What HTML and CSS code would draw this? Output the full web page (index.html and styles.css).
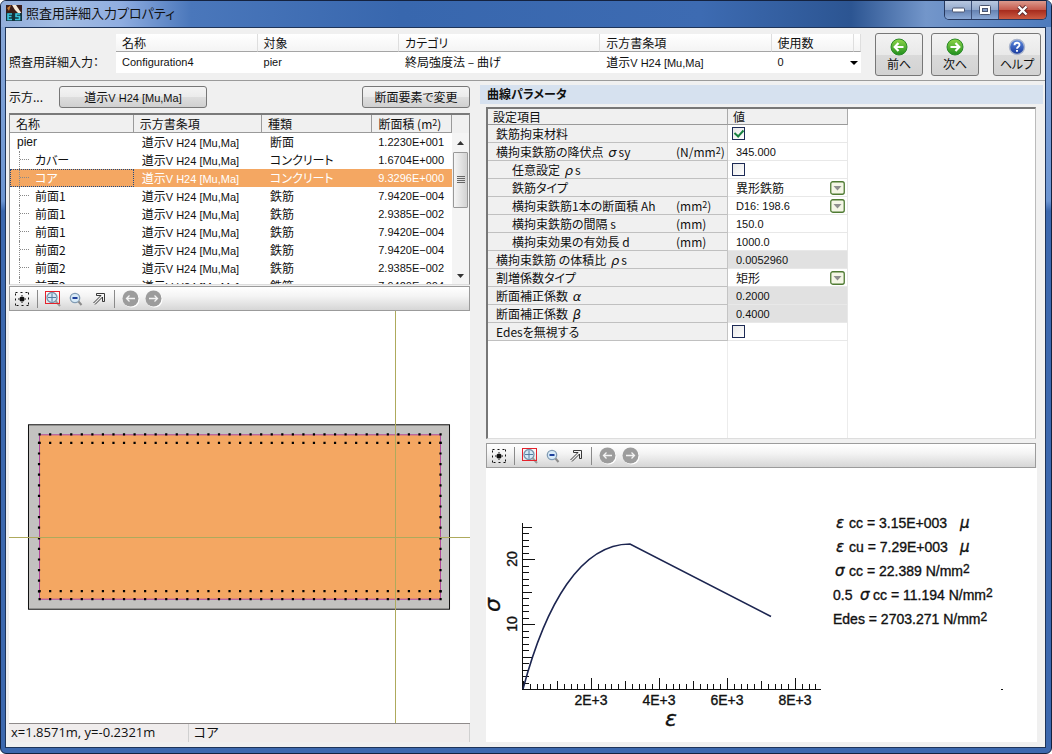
FILE: index.html
```html
<!DOCTYPE html>
<html lang="ja">
<head>
<meta charset="utf-8">
<title>照査用詳細入力プロパティ</title>
<link rel="stylesheet" href="styles.css">
</head>
<body>
<svg class="defs" width="0" height="0" aria-hidden="true">
  <defs>
    <linearGradient id="green" x1="0" y1="0" x2="0" y2="1"><stop offset="0" stop-color="#8fd64a"/><stop offset="1" stop-color="#1f8f1c"/></linearGradient>
    <linearGradient id="blue" x1="0" y1="0" x2="0" y2="1"><stop offset="0" stop-color="#5d8be0"/><stop offset="1" stop-color="#17389c"/></linearGradient>
    <symbol id="i-fit" viewBox="0 0 14 14"><path d="M.5 3.500V.5H3.500M5.500 .5H8.500M10.500 .5H13.500V3.500M13.500 5.500V8.500M13.500 10.500V13.500H10.500M8.500 13.500H5.500M3.500 13.500H.5V10.500M.5 8.500V5.500" fill="none" stroke="#111" stroke-dasharray="2 1"/><circle cx="7" cy="7" r="2.600" fill="#111"/><path d="M3 7H4M10 7H11M7 3V4M7 10V11" stroke="#111"/></symbol>
    <symbol id="i-zoomin" viewBox="0 0 16 16"><circle cx="7" cy="6.500" r="5" fill="#d5e9f6" stroke="#7894ac" stroke-width="1.300"/><path d="M7 2.500V10.500M3 6.500H11" stroke="#557da0"/><path d="M10.500 10L15 15" stroke="#999" stroke-width="2"/><rect x=".5" y=".5" width="14" height="12" fill="none" stroke="#e5222c"/></symbol>
    <symbol id="i-zoomout" viewBox="0 0 14 14"><circle cx="6" cy="6" r="4.700" fill="#d8ebf8" stroke="#829cb4" stroke-width="1.300"/><path d="M3.500 6H8.500" stroke="#1d3f9b" stroke-width="2"/><path d="M9.500 9.500L12.500 13" stroke="#8b8b8b" stroke-width="2"/></symbol>
    <symbol id="i-arrow" viewBox="0 0 14 14"><path d="M1.500 11L9 3.500H4.500V1.500H12.500V9.500H10.500V5L3 12.500" fill="none" stroke="#222" stroke-width=".9"/></symbol>
    <symbol id="i-back" viewBox="0 0 18 18"><circle cx="9.500" cy="9.500" r="8" fill="#fff"/><circle cx="8.500" cy="8.500" r="8" fill="#9c9c9c"/><path d="M13 8.500H4.500M7.500 5.500L4.500 8.500L7.500 11.500" fill="none" stroke="#f4f4f4" stroke-width="1.300"/></symbol>
    <symbol id="i-next" viewBox="0 0 18 18"><circle cx="9.500" cy="9.500" r="8" fill="#fff"/><circle cx="8.500" cy="8.500" r="8" fill="#9c9c9c"/><path d="M4 8.500H12.500M9.500 5.500L12.500 8.500L9.500 11.500" fill="none" stroke="#f4f4f4" stroke-width="1.300"/></symbol>
    <symbol id="i-drop" viewBox="0 0 15 14"><rect x=".75" y=".75" width="13.500" height="12.500" rx="2" fill="#f4f6e6" stroke="#4f7b33" stroke-width="1.300"/><path d="M3.500 5H11.500L7.500 9.500Z" fill="#8f8f8f"/></symbol>
  </defs>
</svg>

<div class="window">
  <header class="titlebar">
    <svg class="app-icon" viewBox="0 0 16 16" aria-hidden="true"><rect width="16" height="16" fill="#3a1c17"/><path d="M6 0H10L16 9V12L9 5Z" fill="#f6e9d8"/><path d="M1 3L5 0L3 6Z" fill="#c67a34"/><path d="M0 8H16V16H0Z" fill="#13323c"/><path d="M6 9H2V14.500H6M2 11.500H5.500M14 9H10V11.500H13.500V14.500H9" fill="none" stroke="#3cc4dc" stroke-width="1.600"/></svg>
    <h1 class="title">照査用詳細入力プロパティ</h1>
    <div class="caption-buttons">
      <button class="cap" aria-label="最小化"><svg width="13" height="6" viewBox="0 0 13 6"><rect x=".5" y="1" width="12" height="4" rx="1" fill="#fff" stroke="#4b5570"/></svg></button>
      <button class="cap" aria-label="最大化"><svg width="12" height="10" viewBox="0 0 12 10"><rect x=".5" y=".5" width="11" height="9" rx="1" fill="#fff" stroke="#4b5570"/><rect x="3.500" y="3.500" width="5" height="3" fill="#7e9ac9" stroke="#4b5570"/></svg></button>
      <button class="cap cap-close" aria-label="閉じる"><svg width="13" height="11" viewBox="0 0 13 11"><path d="M2.500 1.500L10.500 9.500M10.500 1.500L2.500 9.500" stroke="#57262a" stroke-width="4"/><path d="M2.500 1.500L10.500 9.500M10.500 1.500L2.500 9.500" stroke="#fff" stroke-width="2.400"/></svg></button>
    </div>
  </header>

  <div class="client">
    <section class="topbar">
      <span class="topbar-label">照査用詳細入力：</span>
      <table class="config">
        <colgroup><col class="c-name"><col class="c-name"><col class="c-cat"><col class="c-code"><col class="c-use"><col class="c-end"></colgroup>
        <thead><tr><th>名称</th><th>対象</th><th>カテゴリ</th><th>示方書条項</th><th>使用数</th><th></th></tr></thead>
        <tbody><tr><td>Configuration4</td><td>pier</td><td><span class="jp">終局強度法 – 曲げ</span></td><td><span class="jp">道示</span>V H24 [Mu,Ma]</td><td colspan="2"><div class="use">0<button class="open" aria-label="一覧を開く"><svg width="8" height="4" viewBox="0 0 8 4"><path d="M0 0H8L4 4Z"/></svg></button></div></td></tr></tbody>
      </table>
      <div class="nav">
        <button class="big"><svg width="18" height="18" viewBox="0 0 18 18"><circle cx="9" cy="9" r="8" fill="url(#green)" stroke="#2c8a2a"/><path d="M13.500 9H5M8.500 5L4.700 9L8.500 13" fill="none" stroke="#fff" stroke-width="2.200"/></svg>前へ</button>
        <button class="big"><svg width="18" height="18" viewBox="0 0 18 18"><circle cx="9" cy="9" r="8" fill="url(#green)" stroke="#2c8a2a"/><path d="M4.500 9H13M9.500 5L13.300 9L9.500 13" fill="none" stroke="#fff" stroke-width="2.200"/></svg>次へ</button>
        <button class="big big-help"><svg width="18" height="18" viewBox="0 0 18 18"><circle cx="9" cy="9" r="7.500" fill="url(#blue)" stroke="#a9b4cc" stroke-width="1.400"/><path d="M6.500 7.200C6.500 3.800 11.600 4 11.500 7C11.400 8.800 9 8.700 9 10.800M9 12V13.800" fill="none" stroke="#fff" stroke-width="1.900"/></svg>ヘルプ</button>
      </div>
    </section>

    <main class="panes">
      <section class="left">
        <div class="actions">
          <span class="actions-label">示方...</span>
          <button class="btn btn-code"><span class="jp">道示</span>V H24 [Mu,Ma]</button>
          <button class="btn btn-change"><span class="jp">断面要素で変更</span></button>
        </div>
        <div class="list">
          <div class="list-clip">
            <table class="elements">
              <colgroup><col class="e-name"><col class="e-code"><col class="e-kind"><col class="e-area"></colgroup>
              <thead><tr><th>名称</th><th>示方書条項</th><th>種類</th><th>断面積 (m<sup>2</sup>)</th></tr></thead>
              <tbody>
                <tr><td class="root">pier</td><td><span class="jp">道示</span>V H24 [Mu,Ma]</td><td class="jp">断面</td><td class="num">1.2230E+001</td></tr>
                <tr><td><div class="node"><i class="stem"></i><span class="jp">カバー</span></div></td><td><span class="jp">道示</span>V H24 [Mu,Ma]</td><td class="jp">コンクリート</td><td class="num">1.6704E+000</td></tr>
                <tr class="selected"><td><div class="node"><i class="stem"></i><span class="jp">コア</span></div></td><td><span class="jp">道示</span>V H24 [Mu,Ma]</td><td class="jp">コンクリート</td><td class="num">9.3296E+000</td></tr>
                <tr><td><div class="node"><i class="stem"></i><span class="jp">前面1</span></div></td><td><span class="jp">道示</span>V H24 [Mu,Ma]</td><td class="jp">鉄筋</td><td class="num">7.9420E−004</td></tr>
                <tr><td><div class="node"><i class="stem"></i><span class="jp">前面1</span></div></td><td><span class="jp">道示</span>V H24 [Mu,Ma]</td><td class="jp">鉄筋</td><td class="num">2.9385E−002</td></tr>
                <tr><td><div class="node"><i class="stem"></i><span class="jp">前面1</span></div></td><td><span class="jp">道示</span>V H24 [Mu,Ma]</td><td class="jp">鉄筋</td><td class="num">7.9420E−004</td></tr>
                <tr><td><div class="node"><i class="stem"></i><span class="jp">前面2</span></div></td><td><span class="jp">道示</span>V H24 [Mu,Ma]</td><td class="jp">鉄筋</td><td class="num">7.9420E−004</td></tr>
                <tr><td><div class="node"><i class="stem"></i><span class="jp">前面2</span></div></td><td><span class="jp">道示</span>V H24 [Mu,Ma]</td><td class="jp">鉄筋</td><td class="num">2.9385E−002</td></tr>
                <tr><td><div class="node"><i class="stem"></i><span class="jp">前面2</span></div></td><td><span class="jp">道示</span>V H24 [Mu,Ma]</td><td class="jp">鉄筋</td><td class="num">7.9420E−004</td></tr>
              </tbody>
            </table>
          </div>
          <div class="scroll" aria-hidden="true">
            <svg width="7" height="4" viewBox="0 0 7 4"><path d="M0 4L3.500 0L7 4Z" fill="#333"/></svg>
            <div class="thumb"><svg width="8" height="8" viewBox="0 0 8 8"><path d="M0 .5H8M0 2.500H8M0 4.500H8M0 6.500H8" stroke="#666"/></svg></div>
            <svg class="down" width="7" height="4" viewBox="0 0 7 4"><path d="M0 0L3.500 4L7 0Z" fill="#333"/></svg>
          </div>
        </div>
        <div class="tools">
          <button class="tool" aria-label="全体表示"><svg width="14" height="14"><use href="#i-fit"/></svg></button>
          <i class="sep"></i>
          <button class="tool" aria-label="拡大"><svg width="16" height="16"><use href="#i-zoomin"/></svg></button>
          <button class="tool" aria-label="縮小"><svg width="14" height="14"><use href="#i-zoomout"/></svg></button>
          <button class="tool" aria-label="移動"><svg width="14" height="14"><use href="#i-arrow"/></svg></button>
          <i class="sep"></i>
          <button class="tool" aria-label="戻る"><svg width="18" height="18"><use href="#i-back"/></svg></button>
          <button class="tool" aria-label="進む"><svg width="18" height="18"><use href="#i-next"/></svg></button>
        </div>
        <div class="canvas">
          <svg viewBox="0 0 462 411" preserveAspectRatio="xMidYMid slice" role="img" aria-label="断面図">
            <rect x="20.500" y="113.500" width="420" height="184" fill="#c3c2c0" stroke="#111"/>
            <rect x="31.500" y="123.500" width="400" height="164" fill="#f4a762" stroke="#b0489c"/>
            <path d="M30.500 123H433M30.500 287.500H433M30.500 131.500H433M30.500 279.500H433" stroke="#000" stroke-width="2.200" stroke-dasharray="2.200 8.326"/>
            <path d="M31 130.500V282M431.500 130.500V282" stroke="#000" stroke-width="2.200" stroke-dasharray="2.200 8.371"/>
            <path d="M0 225.500H462M386.500 0V411" stroke="#aeaa5c" shape-rendering="crispEdges"/>
          </svg>
        </div>
        <footer class="status"><span class="pos">x=1.8571m, y=-0.2321m</span><span class="sel">コア</span></footer>
      </section>

      <section class="right">
        <h2 class="band">曲線パラメータ</h2>
        <div class="params-box">
          <table class="params">
            <colgroup><col class="p-label"><col class="p-value"></colgroup>
            <thead><tr><th>設定項目</th><th>値</th></tr></thead>
            <tbody>
              <tr><th><label for="v1">鉄筋拘束材料</label></th><td><input id="v1" class="check" type="checkbox" checked></td></tr>
              <tr><th><label class="pl" for="v2"><span>横拘束鉄筋の降伏点 <i class="g">σ</i>sy</span><span class="unit">(N/mm<sup>2</sup>)</span></label></th><td><input id="v2" class="val" type="text" value="345.000"></td></tr>
              <tr><th class="sub"><label for="v3">任意設定 <i class="g">ρ</i>s</label></th><td><input id="v3" class="check" type="checkbox"></td></tr>
              <tr><th class="sub"><label for="v4">鉄筋タイプ</label></th><td><div class="combo"><select id="v4" class="val jp"><option>異形鉄筋</option></select><svg width="15" height="14"><use href="#i-drop"/></svg></div></td></tr>
              <tr><th class="sub"><label class="pl" for="v5"><span>横拘束鉄筋1本の断面積 Ah</span><span class="unit">(mm<sup>2</sup>)</span></label></th><td><div class="combo"><select id="v5" class="val"><option>D16: 198.6</option></select><svg width="15" height="14"><use href="#i-drop"/></svg></div></td></tr>
              <tr><th class="sub"><label class="pl" for="v6"><span>横拘束鉄筋の間隔 s</span><span class="unit">(mm)</span></label></th><td><input id="v6" class="val" type="text" value="150.0"></td></tr>
              <tr><th class="sub"><label class="pl" for="v7"><span>横拘束効果の有効長 d</span><span class="unit">(mm)</span></label></th><td><input id="v7" class="val" type="text" value="1000.0"></td></tr>
              <tr><th><label for="v8">横拘束鉄筋 の体積比 <i class="g">ρ</i>s</label></th><td class="ro"><input id="v8" class="val" type="text" value="0.0052960" readonly></td></tr>
              <tr><th><label for="v9">割増係数タイプ</label></th><td><div class="combo"><select id="v9" class="val jp"><option>矩形</option></select><svg width="15" height="14"><use href="#i-drop"/></svg></div></td></tr>
              <tr><th><label for="v10">断面補正係数 <i class="g">α</i></label></th><td class="ro"><input id="v10" class="val" type="text" value="0.2000" readonly></td></tr>
              <tr><th><label for="v11">断面補正係数 <i class="g">β</i></label></th><td class="ro"><input id="v11" class="val" type="text" value="0.4000" readonly></td></tr>
              <tr><th><label for="v12">Edesを無視する</label></th><td><input id="v12" class="check" type="checkbox"></td></tr>
            </tbody>
          </table>
          <div class="params-rest"><i class="rest-label"></i><i class="rest-value"></i></div>
        </div>
        <div class="tools">
          <button class="tool" aria-label="全体表示"><svg width="14" height="14"><use href="#i-fit"/></svg></button>
          <i class="sep"></i>
          <button class="tool" aria-label="拡大"><svg width="16" height="16"><use href="#i-zoomin"/></svg></button>
          <button class="tool" aria-label="縮小"><svg width="14" height="14"><use href="#i-zoomout"/></svg></button>
          <button class="tool" aria-label="移動"><svg width="14" height="14"><use href="#i-arrow"/></svg></button>
          <i class="sep"></i>
          <button class="tool" aria-label="戻る"><svg width="18" height="18"><use href="#i-back"/></svg></button>
          <button class="tool" aria-label="進む"><svg width="18" height="18"><use href="#i-next"/></svg></button>
        </div>
        <div class="chart">
          <svg viewBox="0 0 551 273" preserveAspectRatio="xMinYMin meet" role="img" aria-label="応力ひずみ曲線">
            <g stroke="#111" shape-rendering="crispEdges" fill="none">
              <path d="M36.500 55V221.500H335"/>
              <path d="M37 218.500H335" stroke-width="6" stroke-dasharray="1 5.800"/>
              <path d="M37 217H335" stroke-width="9" stroke-dasharray="1 33"/>
              <path d="M105 215.500H335" stroke-width="12" stroke-dasharray="1 67"/>
              <path d="M39.500 222V56" stroke-width="6" stroke-dasharray="1 5.500"/>
              <path d="M41 222V56" stroke-width="9" stroke-dasharray="1 31.500"/>
              <path d="M42.500 157V90" stroke-width="12" stroke-dasharray="1 64"/>
              <path d="M515 221.500H517"/>
            </g>
            <path d="M37 221C60 135 95 76 144 76L285 148.500" fill="none" stroke="#1c2550" stroke-width="1.600"/>
            <g class="axis" text-anchor="middle">
              <text x="105" y="237">2E+3</text><text x="173" y="237">4E+3</text><text x="241" y="237">6E+3</text><text x="309" y="237">8E+3</text>
              <text transform="translate(31 91) rotate(-90)">20</text><text transform="translate(31 156) rotate(-90)">10</text>
              <text class="axis-name" x="185" y="258">ε</text>
              <text class="axis-name" transform="translate(14 137) rotate(-90)">σ</text>
            </g>
            <g class="axis">
              <text x="350" y="60"><tspan class="it">ε</tspan><tspan x="363">cc = 3.15E+003</tspan><tspan class="it" x="474">μ</tspan></text>
              <text x="350" y="84"><tspan class="it">ε</tspan><tspan x="363">cu = 7.29E+003</tspan><tspan class="it" x="474">μ</tspan></text>
              <text x="349" y="108"><tspan class="it">σ</tspan><tspan x="363">cc = 22.389 N/mm</tspan><tspan class="pow" dy="-3">2</tspan></text>
              <text x="347" y="132">0.5<tspan class="it" x="374">σ</tspan><tspan x="387">cc = 11.194 N/mm</tspan><tspan class="pow" dy="-3">2</tspan></text>
              <text x="347" y="156">Edes = 2703.271 N/mm<tspan class="pow" dy="-3">2</tspan></text>
            </g>
          </svg>
        </div>
      </section>
    </main>
  </div>
</div>
</body>
</html>
```

FILE: styles.css
```css
* { box-sizing: border-box; }
body {
  margin: 0;
  font: 12px/16px "Noto Sans CJK JP", sans-serif;
  font-feature-settings: "palt";
  color: #111;
}
button, input, select { font: inherit; color: inherit; margin: 0; }
button { padding: 0; }
svg { display: block; }
sup { font-size: 9px; line-height: 1px; vertical-align: 3px; }
table { border-collapse: separate; border-spacing: 0; table-layout: fixed; }
th { font-weight: 400; text-align: left; }
th, td { padding: 0; white-space: nowrap; overflow: hidden; }
.defs { position: absolute; }

.window {
  display: flex;
  flex-direction: column;
  height: 100vh;
  min-height: 600px;
  padding: 0 5px 5px 4px;
  background: linear-gradient(#8aa9d8, #6c95d2 200px, #3c68ae 210px, #3c68ae);
  border: 1px solid #14223f;
  border-radius: 6px;
  overflow: hidden;
}
.titlebar {
  display: flex;
  align-items: flex-start;
  height: 26px;
  margin: 0 -5px 0 -4px;
  padding: 0 4px 0 5px;
  background: linear-gradient(90deg, #93aedb, #a4bde3 60px, #8fade0 120px, #4a77bb 190px, #3867ae 400px, #3d6bb2 700px, #2c5592 850px, #7396ca 925px, #4d7abc);
}
.app-icon { width: 16px; height: 16px; margin-top: 4px; }
.title { flex: 1; margin: 3px 0 0 4px; font-size: 13px; line-height: 18px; font-weight: 400; }
.caption-buttons { display: flex; border: 1px solid #26385e; border-top: 0; border-radius: 0 0 5px 5px; overflow: hidden; }
.cap {
  display: grid; place-items: center;
  width: 27px; height: 18px;
  border: 0; border-right: 1px solid #3c4f78;
  background: linear-gradient(#b9c8e0, #92a8cc 50%, #6480b0 50%, #8ba9d6);
}
.cap-close { width: 47px; border-right: 0; background: linear-gradient(#dc9a8e, #c4584a 50%, #a52a1c 50%, #cc5b42); }

.client {
  flex: 1;
  min-height: 0;
  display: flex;
  flex-direction: column;
  background: #f0f0f0;
  border: 1px solid #1e3459;
}

.topbar { display: flex; align-items: flex-start; padding: 5px 4px 4px 3px; border-bottom: 1px solid #9b9b9b; }
.topbar-label { width: 107px; padding-top: 21px; white-space: nowrap; }
.config { flex: 1; margin-top: 1px; background: #fff; }
.config th { height: 18px; padding-left: 6px; line-height: 15px; background: linear-gradient(#fff, #f4f4f4); border-right: 1px solid #dedede; border-bottom: 1px solid #a5a5a5; }
.config td { height: 21px; padding-left: 6px; font-family: "Liberation Sans", "Noto Sans CJK JP", sans-serif; font-size: 11px; line-height: 15px; }
.c-name { width: 19%; } .c-cat { width: 27%; } .c-code { width: 23%; } .c-use { width: 11%; } .c-end { width: 1%; }
.use { display: flex; justify-content: space-between; align-items: center; }
.open { display: grid; place-items: center; width: 14px; height: 16px; border: 0; background: none; }
.nav { display: flex; gap: 8px; margin-left: 14px; }
.big {
  display: flex; flex-direction: column; align-items: center;
  width: 48px; height: 43px; padding-top: 4px;
  border: 1px solid #777; border-radius: 3px;
  background: linear-gradient(#f3f3f3, #e9e9e9 50%, #dadada 50%, #d2d2d2);
  font-size: 12px; line-height: 16px;
}
.big-help { margin-left: 6px; }

.panes { flex: 1; min-height: 0; display: grid; grid-template-columns: 461fr 563fr; column-gap: 10px; padding: 0 2px 5px 3px; }
.left, .right { display: flex; flex-direction: column; min-width: 0; min-height: 0; }

.actions { display: flex; align-items: center; height: 32px; }
.actions-label { width: 50px; }
.btn { height: 22px; border: 1px solid #777; border-radius: 3px; background: linear-gradient(#f4f4f4, #ebebeb 50%, #dedede 50%, #d0d0d0); font-family: "Liberation Sans", sans-serif; font-size: 11px; white-space: nowrap; line-height: 18px; }
.btn-code { width: 148px; }
.btn-change { width: 108px; margin-left: auto; }
.jp { font-family: "Noto Sans CJK JP", sans-serif; font-size: 12px; }

.list { display: flex; height: 172px; background: #fff; border: 1px solid #8a8a8a; border-top: 2px solid #7a7a7a; border-bottom-color: #ddd; }
.list-clip { flex: 1; min-width: 0; overflow: hidden; }
.elements { width: 100%; font-family: "Liberation Sans", sans-serif; font-size: 11px; }
.elements th { height: 18px; padding-left: 6px; background: #f0f0f0; border-right: 1px solid #9a9a9a; border-bottom: 1px solid #9a9a9a; font: 12px/15px "Noto Sans CJK JP", sans-serif; }
.elements td { height: 18px; padding-left: 8px; line-height: 16px; }
.elements .num { padding: 0 8px 0 0; text-align: right; }
.elements .root { padding-left: 7px; font-size: 12px; }
.elements td:first-child:not(.root) { padding-left: 9px; }
.e-name { width: 28%; } .e-code { width: 29%; } .e-kind { width: 25%; } .e-area { width: 18%; }
.node { display: flex; align-items: center; height: 18px; gap: 5px; }
.stem { width: 11px; height: 18px; border-left: 1px dotted #888; background: repeating-linear-gradient(90deg, #888 0 1px, transparent 1px 2px) 0 8px / 100% 1px no-repeat; }
.selected { background: #f4a762; color: #fff; }
.selected td:first-child { outline: 1px dotted #1d4a86; outline-offset: -1px; }
.scroll { width: 17px; display: flex; flex-direction: column; align-items: center; padding: 26px 0 6px; background: linear-gradient(#f0f0f0 18px, #f4f4f4 18px); }
.thumb { display: grid; place-items: center; width: 15px; height: 56px; margin-top: 7px; border: 1px solid #999; border-radius: 1px; background: linear-gradient(90deg, #f5f5f5, #d2d2d2); }
.down { margin-top: auto; }

.tools {
  display: flex; align-items: center; flex: none; height: 25px; margin-top: 1px; padding-left: 4px; gap: 7px;
  border: 1px solid #9b9b9b; background: linear-gradient(#fff, #f4f4f4 40%, #d6d6d6);
}
.tool { display: grid; place-items: center; border: 0; background: none; min-width: 16px; }
.tool:last-child { margin-left: -2px; }
.sep { width: 1px; height: 18px; background: #8a8a8a; }

.canvas { flex: 1; min-height: 0; background: #fff; border-bottom: 1px solid #8f8b8b; }
.canvas svg, .chart svg { width: 100%; height: 100%; }
.status { display: flex; height: 18px; background: #f0eded; font: 13px/17px "Open Sans", "Noto Sans CJK JP", sans-serif; }
.pos { width: 180px; padding-left: 2px; border-right: 1px solid #d0d0d0; }
.sel { flex: 1; padding-left: 4px; border-right: 1px solid #d0d0d0; }

.band { margin: 4px 0 0; height: 19px; padding-left: 7px; background: #d6e1ef; font-size: 12px; line-height: 17px; font-weight: 700; }
.params-box { flex: 331; min-height: 0; margin: 3px 7px 0 6px; display: flex; flex-direction: column; overflow: hidden; background: #fff; border: 1px solid #bbb; border-top: 2px solid #777; border-left: 2px solid #777; border-bottom-color: #ddd; }
.params { width: 360px; }
.p-label { width: 240px; } .p-value { width: 120px; }
.params thead th { height: 16px; padding-left: 5px; line-height: 14px; background: #f0f0f0; border-right: 1px solid #aaa; border-bottom: 1px solid #999; }
.params tbody th { height: 18px; padding-left: 8px; background: #f0f0f0; border-right: 1px solid #c4c4c4; border-bottom: 1px solid #c0c0c0; line-height: 15px; }
.params tbody th.sub { padding-left: 24px; }
.params td { height: 18px; border-right: 1px solid #e8e8e8; border-bottom: 1px solid #e8e8e8; }
.params label { display: block; }
.params .pl { display: flex; justify-content: space-between; }
.unit { width: 51px; }
.g { display: inline-block; padding: 0 2px; font: italic 13px/12px "DejaVu Sans", sans-serif; }
.params .ro { background: #e1e1e1; }
.val { display: block; width: 100%; height: 17px; padding: 0 0 0 8px; border: 0; border-radius: 0; background: none; appearance: none; font-family: "Liberation Sans", sans-serif; font-size: 11px; line-height: 16px; outline: 0; }
.val.jp { font-family: "Noto Sans CJK JP", sans-serif; font-size: 12px; }
.combo { display: flex; align-items: center; padding-right: 2px; }
.combo svg { flex: none; pointer-events: none; }
.check { display: grid; place-items: center; width: 13px; height: 13px; margin: 0 0 0 4px; appearance: none; border: 1px solid #1d2a55; background: linear-gradient(135deg, #e8e8e8, #fff); }
.check:checked::after { content: ""; width: 4px; height: 7px; margin-bottom: 2px; border: solid #17803f; border-width: 0 2px 2px 0; transform: rotate(42deg); }
.params-rest { flex: 1; display: flex; }
.rest-label { width: 240px; border-right: 1px solid #ececec; }
.rest-value { width: 120px; border-right: 1px solid #ececec; }
.right .tools { margin: 4px 7px 0 6px; }
.chart { flex: 275; min-height: 0; margin: 0 6px 0 6px; background: #fff; }
.axis { font: 14px "Liberation Sans", sans-serif; fill: #111; stroke: #111; stroke-width: .35px; }
.it { font: italic 15px "DejaVu Sans", sans-serif; }
.pow { font-size: 12px; }
.axis-name { font: italic 22px "DejaVu Sans", sans-serif; }
```
